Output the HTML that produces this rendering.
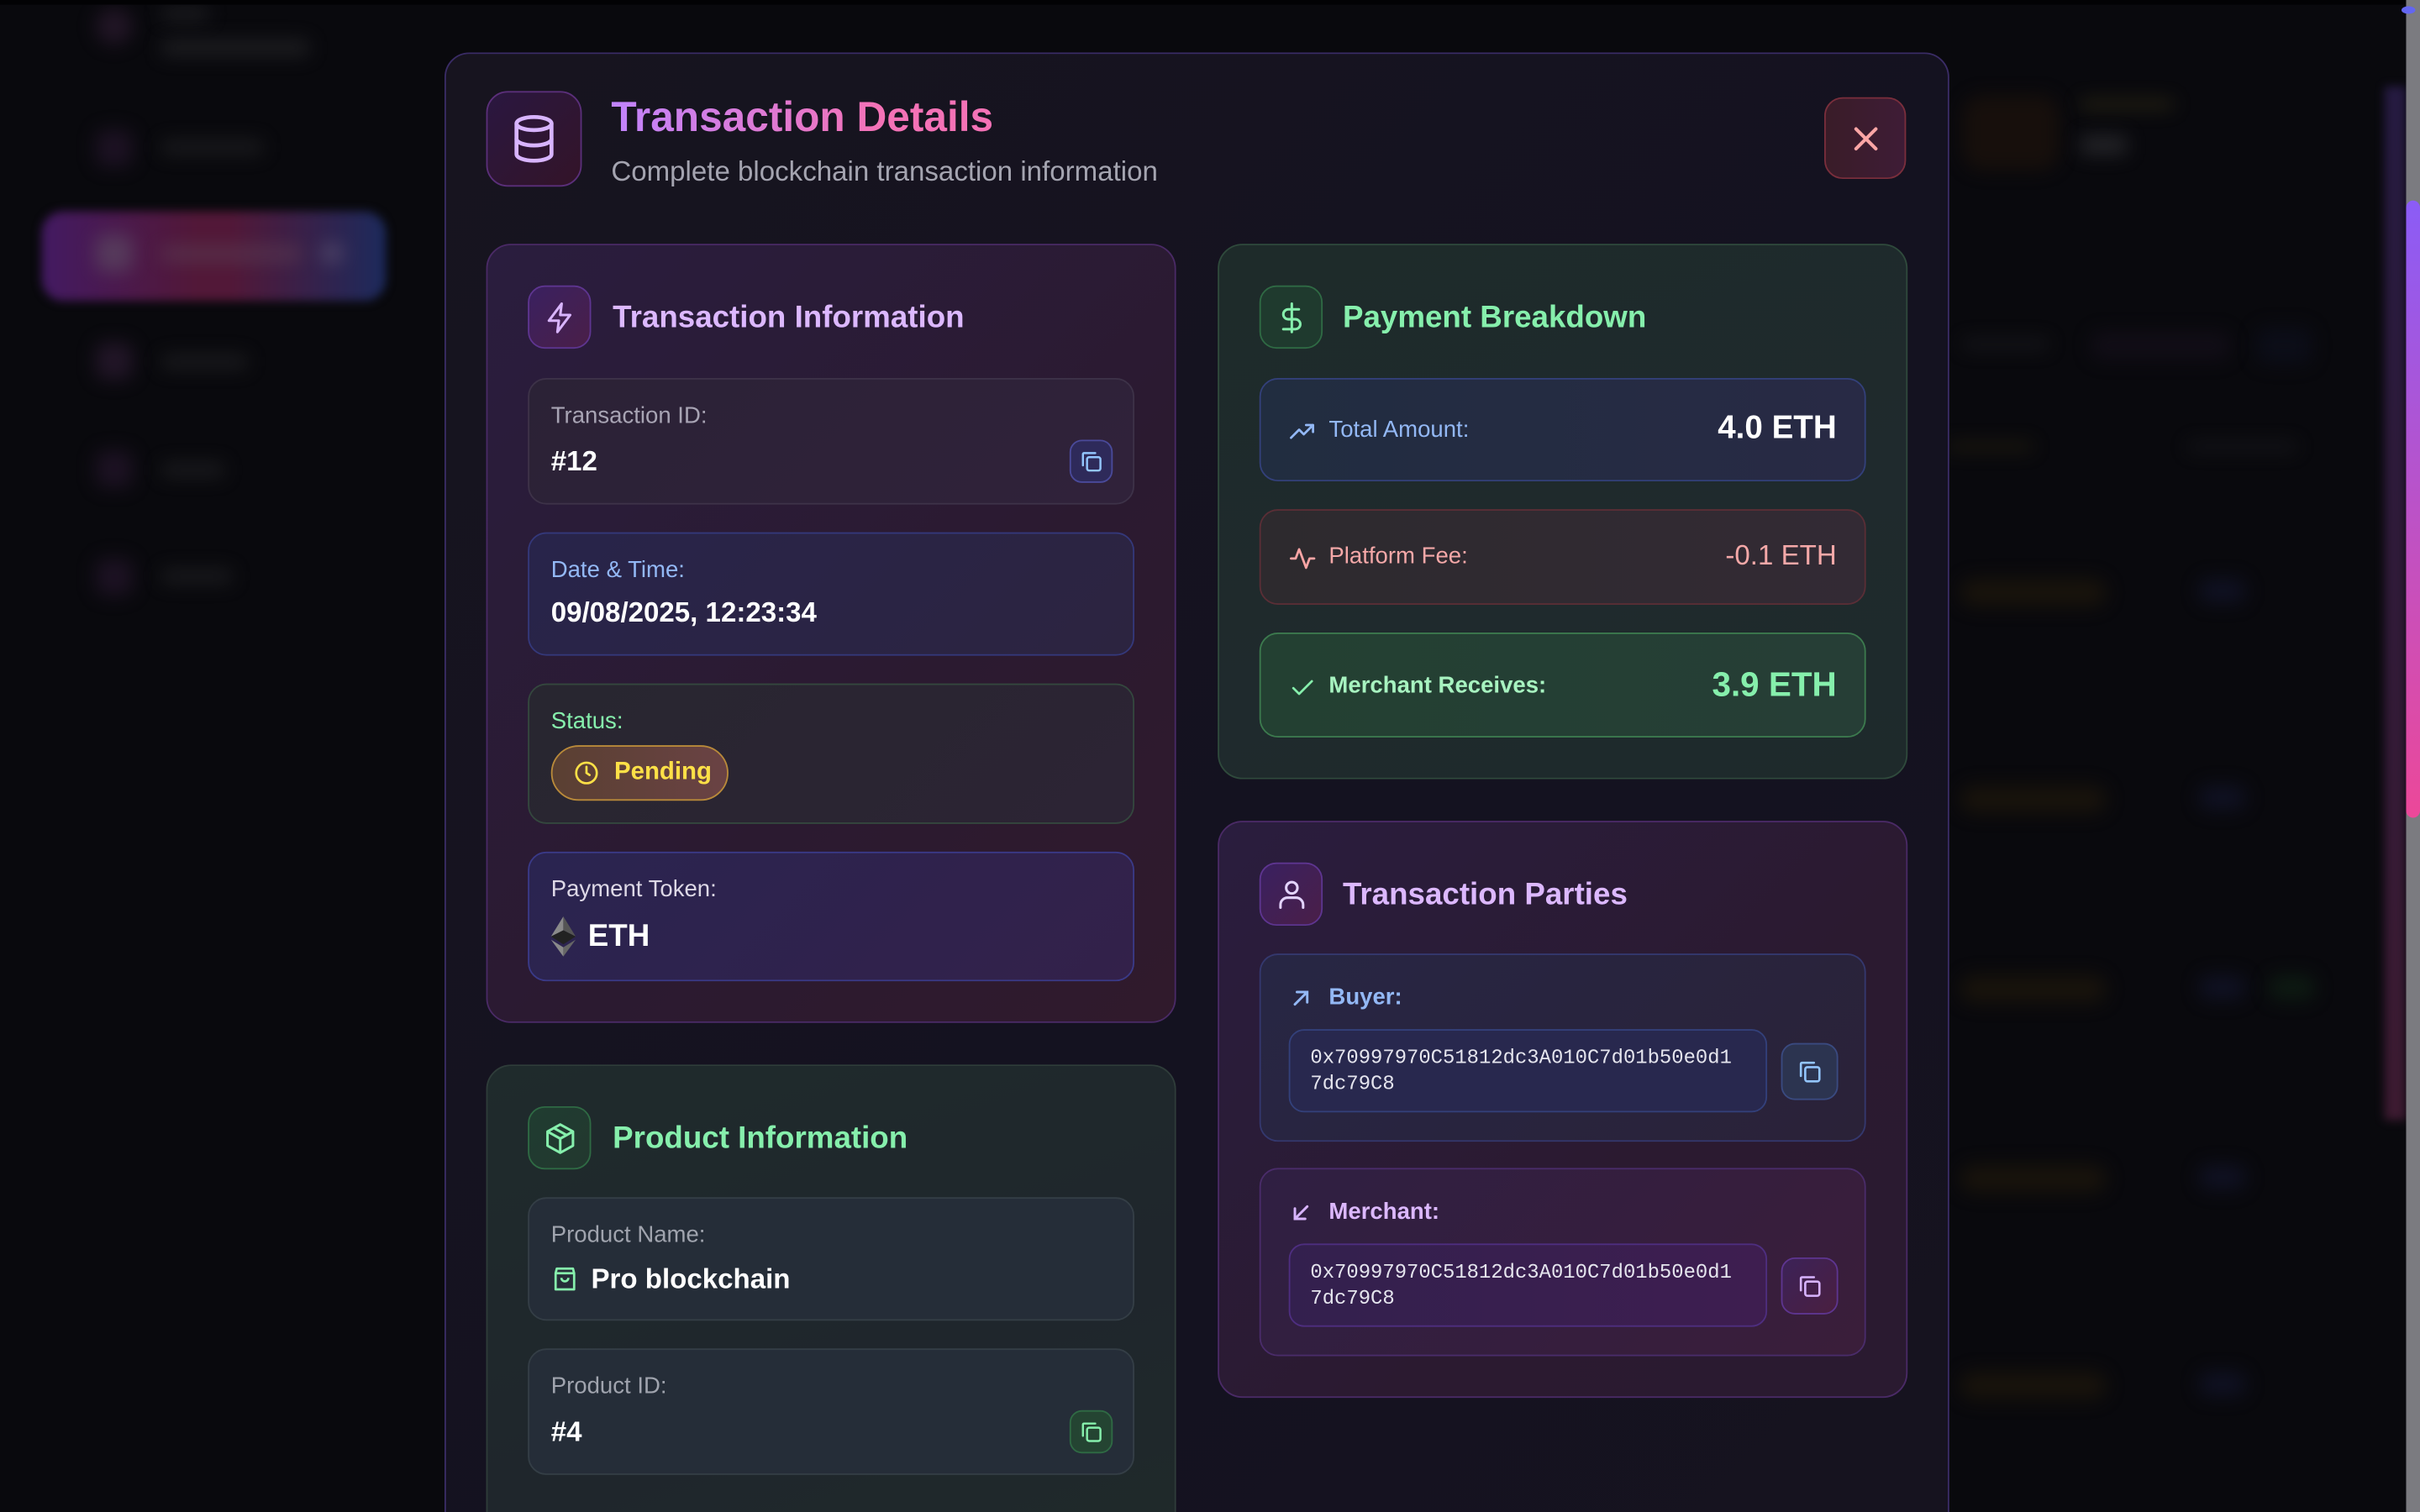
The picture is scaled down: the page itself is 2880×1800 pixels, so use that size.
<!DOCTYPE html>
<html><head><meta charset="utf-8">
<style>
*{box-sizing:border-box;margin:0;padding:0}
html,body{width:2880px;height:1800px;overflow:hidden;background:#09090d}
#s{position:absolute;left:0;top:0;width:1568px;height:980px;transform:scale(1.836735);transform-origin:0 0;background:#09090d;font-family:"Liberation Sans",sans-serif;overflow:hidden}
.a{position:absolute}
.bl{filter:blur(6px);opacity:.75}
.card{position:absolute;border-radius:16px}
.f{position:absolute;border-radius:12px;border:1px solid}
.lbl{position:absolute;left:14px;font-size:15px}
.val{position:absolute;left:14px;font-size:18px;font-weight:bold;color:#fff}
.ic{position:absolute;width:41px;height:41px;border-radius:11px;border:1px solid;display:flex;align-items:center;justify-content:center}
.ttl{position:absolute;font-size:20px;font-weight:bold}
.cp{position:absolute;width:28px;height:28px;border-radius:8px;border:1px solid;display:flex;align-items:center;justify-content:center}
svg{display:block}
.mono{font-family:"Liberation Mono","DejaVu Sans Mono",monospace;font-size:13px;color:#e5e5ee;line-height:17px}
</style></head><body><div id="s">
<div class="a bl" style="left:62px;top:5px;width:24px;height:24px;border-radius:50%;background:#2a1a2e"></div>
<div class="a bl" style="left:105px;top:5px;width:30px;height:8px;background:#262629"></div>
<div class="a bl" style="left:105px;top:26px;width:95px;height:10px;background:#262629"></div>
<div class="a bl" style="left:62px;top:84px;width:24px;height:24px;border-radius:6px;background:#23152a"></div>
<div class="a bl" style="left:105px;top:91px;width:65px;height:9px;background:#222225"></div>
<div class="a" style="left:27px;top:137px;width:223px;height:58px;border-radius:14px;background:linear-gradient(90deg,#431a62,#521838 45%,#521838 55%,#1c2a5c);filter:blur(3px)"></div>
<div class="a bl" style="left:62px;top:152px;width:24px;height:24px;border-radius:6px;background:#5a4560"></div>
<div class="a bl" style="left:105px;top:160px;width:90px;height:9px;background:#5a3a52"></div>
<div class="a bl" style="left:208px;top:158px;width:14px;height:12px;border-radius:5px;background:#5a5070"></div>
<div class="a bl" style="left:62px;top:222px;width:24px;height:24px;border-radius:6px;background:#2a1a30"></div>
<div class="a bl" style="left:105px;top:230px;width:55px;height:9px;background:#222225"></div>
<div class="a bl" style="left:62px;top:292px;width:24px;height:24px;border-radius:6px;background:#23152a"></div>
<div class="a bl" style="left:105px;top:300px;width:40px;height:9px;background:#222225"></div>
<div class="a bl" style="left:62px;top:362px;width:24px;height:24px;border-radius:6px;background:#23152a"></div>
<div class="a bl" style="left:105px;top:369px;width:45px;height:9px;background:#222225"></div>
<div class="a" style="left:0;top:0;width:1568px;height:3px;background:#020204"></div>
<div class="a bl" style="left:1272px;top:62px;width:62px;height:48px;border-radius:12px;background:#1c120c"></div>
<div class="a bl" style="left:1348px;top:65px;width:60px;height:5px;background:#3a3418"></div>
<div class="a bl" style="left:1348px;top:88px;width:30px;height:12px;background:#2e2e32"></div>
<div class="a bl" style="left:1272px;top:220px;width:55px;height:6px;background:#1e1e22"></div>
<div class="a bl" style="left:1355px;top:215px;width:90px;height:18px;border-radius:6px;background:#140f1a"></div>
<div class="a bl" style="left:1462px;top:212px;width:36px;height:24px;border-radius:6px;background:#0d0f1c"></div>
<div class="a bl" style="left:1262px;top:287px;width:55px;height:5px;background:#2a2410"></div>
<div class="a bl" style="left:1418px;top:287px;width:70px;height:5px;background:#1e1e22"></div>
<div class="a bl" style="left:1270px;top:375px;width:95px;height:18px;border-radius:9px;background:#1e170c"></div>
<div class="a bl" style="left:1425px;top:375px;width:30px;height:16px;border-radius:6px;background:#12142a"></div>
<div class="a bl" style="left:1270px;top:509px;width:95px;height:18px;border-radius:9px;background:#1e170c"></div>
<div class="a bl" style="left:1425px;top:509px;width:30px;height:16px;border-radius:6px;background:#12142a"></div>
<div class="a bl" style="left:1270px;top:632px;width:95px;height:18px;border-radius:9px;background:#1e170c"></div>
<div class="a bl" style="left:1425px;top:632px;width:30px;height:16px;border-radius:6px;background:#12142a"></div>
<div class="a bl" style="left:1470px;top:632px;width:30px;height:16px;border-radius:6px;background:#0f2014"></div>
<div class="a bl" style="left:1270px;top:755px;width:95px;height:18px;border-radius:9px;background:#1e170c"></div>
<div class="a bl" style="left:1425px;top:755px;width:30px;height:16px;border-radius:6px;background:#12142a"></div>
<div class="a bl" style="left:1270px;top:889px;width:95px;height:18px;border-radius:9px;background:#1e170c"></div>
<div class="a bl" style="left:1425px;top:889px;width:30px;height:16px;border-radius:6px;background:#12142a"></div>
<div class="a" style="left:1545px;top:56px;width:14px;height:670px;background:linear-gradient(180deg,#2c1f4e,#4a1f3a);filter:blur(3px);opacity:.8"></div>
<div class="a" style="left:1559px;top:0;width:9px;height:980px;background:#7b7b80"></div>
<div class="a" style="left:1559px;top:130px;width:9px;height:400px;border-radius:5px;background:linear-gradient(180deg,#8b5cf6,#ec4899)"></div>
<div class="a" style="left:1556px;top:4px;width:9px;height:5px;border-radius:50%;background:#6366f1"></div>

<div class="a" style="left:288px;top:34px;width:975px;height:980px;border-radius:16px;border:1px solid #3a2c66;background:linear-gradient(135deg,#17141f,#141220 60%,#16131f)"></div>
<div class="ic" style="left:315px;top:59px;width:62px;height:62px;border-radius:14px;border-color:#5b2f7a;background:linear-gradient(135deg,#2a1740,#331428)">
<svg width="34" height="34" viewBox="0 0 24 24" fill="none" stroke="#d8b4fe" stroke-width="1.8" stroke-linecap="round"><ellipse cx="12" cy="5" rx="8" ry="3"/><path d="M4 5v14c0 1.7 3.6 3 8 3s8-1.3 8-3V5"/><path d="M4 12c0 1.7 3.6 3 8 3s8-1.3 8-3"/></svg></div>
<div class="a" style="left:396px;top:61px;font-size:27px;font-weight:bold;background:linear-gradient(90deg,#c084fc,#f472b6 70%);-webkit-background-clip:text;background-clip:text;color:transparent;white-space:nowrap">Transaction Details</div>
<div class="a" style="left:396px;top:101px;font-size:18px;color:#a4a4b0;white-space:nowrap">Complete blockchain transaction information</div>
<div class="a" style="left:1182px;top:63px;width:53px;height:53px;border-radius:12px;border:1px solid #7a2e3c;background:linear-gradient(90deg,#3a1c28,#3e1c36);display:flex;align-items:center;justify-content:center">
<svg width="22" height="22" viewBox="0 0 24 24" stroke="#fca5a5" stroke-width="2.4" stroke-linecap="round"><path d="M5 5l14 14M19 5L5 19"/></svg></div>

<div class="card" style="left:315px;top:158px;width:447px;height:505px;border:1px solid #4a2a66;background:linear-gradient(135deg,#2a1d3e,#2b1a30 60%,#301a2c)"></div>
<div class="ic" style="left:342px;top:185px;border-color:#5e3590;background:linear-gradient(135deg,#3a2060,#4a1f48)">
<svg width="22" height="22" viewBox="0 0 24 24" fill="none" stroke="#d8b4fe" stroke-width="1.8" stroke-linejoin="round"><path d="M13 2L4 14h7l-1 8 9-12h-7z"/></svg></div>
<div class="ttl" style="left:397px;top:195px;color:#dcb8ff">Transaction Information</div>

<div class="f" style="left:342px;top:245px;width:393px;height:82px;border-color:#3d3248;background:linear-gradient(135deg,#2b2236,#30223a)">
<div class="lbl" style="top:15px;color:#a8a4b4">Transaction ID:</div>
<div class="val" style="top:43px">#12</div>
<div class="cp" style="left:350px;top:39px;border-color:#4a4a9a;background:#2e2a5a"><svg width="16" height="16" viewBox="0 0 24 24" fill="none" stroke="#93c5fd" stroke-width="2" stroke-linecap="round"><rect x="8" y="8" width="13" height="13" rx="2"/><path d="M4 16V5a1 1 0 0 1 1-1h11"/></svg></div>
</div>
<div class="f" style="left:342px;top:345px;width:393px;height:80px;border-color:#34387a;background:linear-gradient(135deg,#28244a,#2c2440)">
<div class="lbl" style="top:15px;color:#93b8f5">Date &amp; Time:</div>
<div class="val" style="top:41px">09/08/2025, 12:23:34</div>
</div>
<div class="f" style="left:342px;top:443px;width:393px;height:91px;border-color:#34473e;background:linear-gradient(135deg,#282630,#2c2434)">
<div class="lbl" style="top:15px;color:#86efac">Status:</div>
<div class="a" style="left:14px;top:39px;width:115px;height:36px;border-radius:18px;border:1px solid #b98a3a;background:linear-gradient(90deg,#5a4032,#6a4244);display:flex;align-items:center;padding-left:14px">
<svg width="16" height="16" viewBox="0 0 24 24" fill="none" stroke="#fde047" stroke-width="2.2" stroke-linecap="round"><circle cx="12" cy="12" r="10"/><path d="M12 6v6l3 2"/></svg>
<span style="margin-left:10px;color:#fde047;font-weight:bold;font-size:16px">Pending</span></div>
</div>
<div class="f" style="left:342px;top:552px;width:393px;height:84px;border-color:#3a3a88;background:linear-gradient(135deg,#2a2450,#33214a)">
<div class="lbl" style="top:15px;color:#ddd8e6">Payment Token:</div>
<svg class="a" style="left:14px;top:41px" width="16" height="26" viewBox="0 0 16 26"><path d="M8 0L0 13l8-4z" fill="#8a8a8a"/><path d="M8 0l8 13-8-4z" fill="#555"/><path d="M0 13l8 5 8-5-8-4z" fill="#222"/><path d="M0 15l8 11v-6z" fill="#8a8a8a"/><path d="M16 15l-8 11v-6z" fill="#666"/></svg>
<div class="val" style="left:38px;top:43px;font-size:20px">ETH</div>
</div>

<div class="card" style="left:315px;top:690px;width:447px;height:320px;border:1px solid #2f3d3a;background:linear-gradient(160deg,#1f2b2c,#1f262c 60%,#1f2a2a)"></div>
<div class="ic" style="left:342px;top:717px;border-color:#2f6a44;background:linear-gradient(135deg,#1f3c30,#23382f)">
<svg width="22" height="22" viewBox="0 0 24 24" fill="none" stroke="#86efac" stroke-width="1.8" stroke-linejoin="round"><path d="M12 2l9 5v10l-9 5-9-5V7z"/><path d="M3 7l9 5 9-5M12 12v10M7.5 4.5l9 5"/></svg></div>
<div class="ttl" style="left:397px;top:727px;color:#86efac">Product Information</div>
<div class="f" style="left:342px;top:776px;width:393px;height:80px;border-color:#343e46;background:#252d38">
<div class="lbl" style="top:15px;color:#a0a4ae">Product Name:</div>
<svg class="a" style="left:14px;top:43px" width="18" height="18" viewBox="0 0 24 24" fill="none" stroke="#86efac" stroke-width="2" stroke-linejoin="round"><path d="M5 3h14l1 4v14H4V7z"/><path d="M4 7h16M9 11a3 3 0 0 0 6 0"/></svg>
<div class="val" style="left:40px;top:42px">Pro blockchain</div>
</div>
<div class="f" style="left:342px;top:874px;width:393px;height:82px;border-color:#343e46;background:#252d38">
<div class="lbl" style="top:15px;color:#a0a4ae">Product ID:</div>
<div class="val" style="top:43px">#4</div>
<div class="cp" style="left:350px;top:39px;border-color:#2f6a44;background:#244432"><svg width="16" height="16" viewBox="0 0 24 24" fill="none" stroke="#86efac" stroke-width="2" stroke-linecap="round"><rect x="8" y="8" width="13" height="13" rx="2"/><path d="M4 16V5a1 1 0 0 1 1-1h11"/></svg></div>
</div>

<div class="card" style="left:789px;top:158px;width:447px;height:347px;border:1px solid #2f4a3c;background:linear-gradient(160deg,#1e2b2a,#1f2a2d 60%,#1e2a2b)"></div>
<div class="ic" style="left:816px;top:185px;border-color:#2f6a44;background:#1f3a2e">
<svg width="22" height="22" viewBox="0 0 24 24" fill="none" stroke="#86efac" stroke-width="1.8" stroke-linecap="round"><path d="M12 2v20M17 6H9.5a3.5 3.5 0 0 0 0 7h5a3.5 3.5 0 0 1 0 7H6"/></svg></div>
<div class="ttl" style="left:870px;top:195px;color:#86efac">Payment Breakdown</div>
<div class="f" style="left:816px;top:245px;width:393px;height:67px;border-color:#33407a;background:linear-gradient(90deg,#212d40,#282a45)">
<svg class="a" style="left:18px;top:25px" width="18" height="18" viewBox="0 0 24 24" fill="none" stroke="#93b8f5" stroke-width="2" stroke-linecap="round" stroke-linejoin="round"><path d="M2 17l7-7 4 4 8-8M15 6h6v6"/></svg>
<div class="lbl" style="left:44px;top:24px;color:#93b8f5">Total Amount:</div>
<div class="a" style="right:18px;top:20px;font-size:21px;font-weight:bold;color:#fff">4.0 ETH</div>
</div>
<div class="f" style="left:816px;top:330px;width:393px;height:62px;border-color:#5a2e36;background:linear-gradient(90deg,#2d2a2e,#332a34)">
<svg class="a" style="left:18px;top:22px" width="18" height="18" viewBox="0 0 24 24" fill="none" stroke="#fca5a5" stroke-width="2" stroke-linecap="round" stroke-linejoin="round"><path d="M2 12h4l3-8 6 16 3-8h4"/></svg>
<div class="lbl" style="left:44px;top:21px;color:#f4a8a8">Platform Fee:</div>
<div class="a" style="right:18px;top:19px;font-size:18px;color:#f4a8a8">-0.1 ETH</div>
</div>
<div class="f" style="left:816px;top:410px;width:393px;height:68px;border-color:#3c7a4e;background:linear-gradient(90deg,#234032,#263e36)">
<svg class="a" style="left:18px;top:26px" width="18" height="18" viewBox="0 0 24 24" fill="none" stroke="#86efac" stroke-width="2" stroke-linecap="round" stroke-linejoin="round"><path d="M4 12l5 5L20 6"/></svg>
<div class="lbl" style="left:44px;top:25px;color:#a7f3c0;font-weight:bold">Merchant Receives:</div>
<div class="a" style="right:18px;top:20px;font-size:22px;font-weight:bold;color:#86efac">3.9 ETH</div>
</div>

<div class="card" style="left:789px;top:532px;width:447px;height:374px;border:1px solid #4a2a66;background:linear-gradient(135deg,#2a1d3e,#2b1a30 60%,#2a1a30)"></div>
<div class="ic" style="left:816px;top:559px;border-color:#5e3590;background:linear-gradient(135deg,#3a2060,#4a1f48)">
<svg width="22" height="22" viewBox="0 0 24 24" fill="none" stroke="#e4d4ff" stroke-width="1.8" stroke-linecap="round"><circle cx="12" cy="7" r="4"/><path d="M4 21v-2a5 5 0 0 1 5-5h6a5 5 0 0 1 5 5v2"/></svg></div>
<div class="ttl" style="left:870px;top:569px;color:#dcb8ff">Transaction Parties</div>
<div class="f" style="left:816px;top:618px;width:393px;height:122px;border-color:#34386e;background:linear-gradient(135deg,#272644,#2a2238)">
<svg class="a" style="left:18px;top:20px" width="16" height="16" viewBox="0 0 24 24" fill="none" stroke="#93b8f5" stroke-width="2.4" stroke-linecap="round"><path d="M6 18L18 6M8 6h10v10"/></svg>
<div class="lbl" style="left:44px;top:19px;color:#93b8f5;font-weight:bold">Buyer:</div>
<div class="a" style="left:18px;top:48px;width:310px;height:54px;border-radius:10px;border:1px solid #33407a;background:#28284e;padding:9px 13px"><div class="mono">0x70997970C51812dc3A010C7d01b50e0d1<br>7dc79C8</div></div>
<div class="a" style="left:337px;top:57px;width:37px;height:37px;border-radius:9px;border:1px solid #3a4a80;background:#2c3450;display:flex;align-items:center;justify-content:center"><svg width="17" height="17" viewBox="0 0 24 24" fill="none" stroke="#93c5fd" stroke-width="2" stroke-linecap="round"><rect x="8" y="8" width="13" height="13" rx="2"/><path d="M4 16V5a1 1 0 0 1 1-1h11"/></svg></div>
</div>
<div class="f" style="left:816px;top:757px;width:393px;height:122px;border-color:#4a2c6a;background:linear-gradient(135deg,#2f1f42,#3a1e3a)">
<svg class="a" style="left:18px;top:20px" width="16" height="16" viewBox="0 0 24 24" fill="none" stroke="#d8b4fe" stroke-width="2.4" stroke-linecap="round"><path d="M18 6L6 18M6 8v10h10"/></svg>
<div class="lbl" style="left:44px;top:19px;color:#dcb8ff;font-weight:bold">Merchant:</div>
<div class="a" style="left:18px;top:48px;width:310px;height:54px;border-radius:10px;border:1px solid #4e2e80;background:linear-gradient(90deg,#33204e,#3e1e50);padding:9px 13px"><div class="mono">0x70997970C51812dc3A010C7d01b50e0d1<br>7dc79C8</div></div>
<div class="a" style="left:337px;top:57px;width:37px;height:37px;border-radius:9px;border:1px solid #5e3590;background:linear-gradient(135deg,#3c2258,#4a1f40);display:flex;align-items:center;justify-content:center"><svg width="17" height="17" viewBox="0 0 24 24" fill="none" stroke="#d8b4fe" stroke-width="2" stroke-linecap="round"><rect x="8" y="8" width="13" height="13" rx="2"/><path d="M4 16V5a1 1 0 0 1 1-1h11"/></svg></div>
</div>
</div></body></html>
